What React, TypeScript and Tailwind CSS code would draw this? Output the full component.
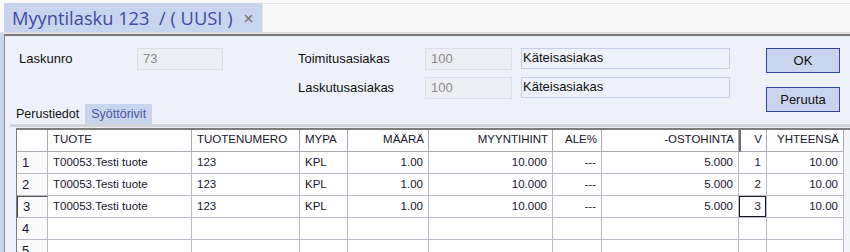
import React from 'react';

type Col = { key: string; label: string; w: string; align: 'left' | 'right' };

const cols: Col[] = [
  { key: 'tuote', label: 'TUOTE', w: 'w-[144px]', align: 'left' },
  { key: 'nro', label: 'TUOTENUMERO', w: 'w-[108px]', align: 'left' },
  { key: 'mypa', label: 'MYPA', w: 'w-[48px]', align: 'left' },
  { key: 'maara', label: 'MÄÄRÄ', w: 'w-[81px]', align: 'right' },
  { key: 'hinta', label: 'MYYNTIHINT', w: 'w-[124px]', align: 'right' },
  { key: 'ale', label: 'ALE%', w: 'w-[49px]', align: 'right' },
  { key: 'osto', label: '-OSTOHINTA', w: 'w-[137px]', align: 'right' },
  { key: 'v', label: 'V', w: 'w-[28px]', align: 'right' },
  { key: 'yht', label: 'YHTEENSÄ', w: 'w-[77px]', align: 'right' },
];

const rows: Record<string, string>[] = [1, 2, 3].map((n) => ({
  tuote: 'T00053.Testi tuote',
  nro: '123',
  mypa: 'KPL',
  maara: '1.00',
  hinta: '10.000',
  ale: '---',
  osto: '5.000',
  v: String(n),
  yht: '10.00',
}));

const CloseIcon = () => (
  <svg width="9" height="9" viewBox="0 0 9 9" className="shrink-0">
    <path d="M1 1 L8 8 M8 1 L1 8" stroke="#7a7a7a" strokeWidth="1.6" />
  </svg>
);

const App: React.FC = () => {
  const allRows = [...rows, null, null];

  return (
    <div className="w-[850px] h-[252px] overflow-hidden bg-[#fafafa] font-['Liberation_Sans',Arial,sans-serif] text-[13px] text-[#111]">
      {/* Tab bar */}
      <div className="h-[36px] pt-[3px] pl-[4px] flex flex-col">
        <div className="flex h-[29px]">
          <div className="w-[258px] bg-[#c9d5ef] flex items-center pl-[8px] pr-[9px] pt-[2px]">
            <span className="whitespace-pre font-['Open_Sans',sans-serif] text-[18.3px] text-[#3d4ba0] leading-none">
              {'Myyntilasku 123  / ( UUSI )'}
            </span>
            <div className="flex-1" />
            <CloseIcon />
          </div>
          <div className="flex-1 border-t border-l border-[#e4e4e4] bg-[#f9f9f9]" />
        </div>
        <div className="h-px bg-[#dadada] -ml-[4px]" />
        <div className="h-[3px] -ml-[4px] flex">
          <div className="w-[4px] bg-[#c9d5ef]" />
          <div className="flex-1 flex flex-col">
            <div className="h-px bg-[#e8e8e8]" />
            <div className="h-[2px] bg-[#7b7b7b]" />
          </div>
        </div>
      </div>

      {/* Body */}
      <div className="flex h-[216px]">
        <div className="w-[4px] bg-[#c9d5ef]" />
        <div className="flex-1 border-l border-[#8a8a8a] bg-[#eef1f9] flex flex-col">
          {/* Form */}
          <div className="h-[68px] shrink-0 flex pt-[12px] pl-[14px]">
            <div className="w-[118px] h-[22px] flex items-center">Laskunro</div>
            <div className="w-[86px] h-[22px] bg-[#eceef4] border border-[#dcdfe7] px-[5px] flex items-center text-[#8a8a8a]">73</div>
            <div className="w-[75px]" />
            <div className="flex flex-col gap-[7px]">
              {['Toimitusasiakas', 'Laskutusasiakas'].map((l) => (
                <div key={l} className="flex h-[22px] shrink-0">
                  <div className="w-[127px] flex items-center">{l}</div>
                  <div className="w-[87px] bg-[#eceef4] border border-[#dcdfe7] px-[5px] flex items-center text-[#8a8a8a]">100</div>
                  <div className="ml-[9px] w-[209px] h-[21px] border border-[#c6cfea] bg-[#eef1f9] px-[1px] leading-[17px]">Käteisasiakas</div>
                </div>
              ))}
            </div>
            <div className="ml-[36px] flex flex-col gap-[14px]">
              <button className="shrink-0 w-[74px] h-[25px] bg-[#c9d5ef] border-[1.5px] border-[#34479e] text-[13px] text-[#111]">OK</button>
              <button className="shrink-0 w-[74px] h-[25px] bg-[#c9d5ef] border-[1.5px] border-[#34479e] text-[13px] text-[#111]">Peruuta</button>
            </div>
          </div>

          {/* Tabs */}
          <div className="ml-[5px] h-[20px] shrink-0 flex items-stretch text-[12.5px]">
            <div className="px-[6px] flex items-center">Perustiedot</div>
            <div className="px-[6px] flex items-center bg-[#c9d5ef] text-[#4856a8]">Syöttörivit</div>
          </div>
          <div className="ml-[5px] h-[3px] shrink-0 bg-[#d3d4d8]" />

          {/* Grid */}
          <div className="ml-[11px] mt-[1px] flex-1 border-t-2 border-l border-[#7d7d7d] bg-[#f3f4f8] overflow-hidden text-[11.5px] text-[#16162c]">
            <div className="flex h-[22px]">
              <div className="w-[31px] bg-white border-r border-b border-[#a6a8b2]" />
              {cols.map((c) => (
                <div
                  key={c.key}
                  className={`${c.w} h-full bg-white border-b border-r border-[#a6a8b2] flex items-center pb-[1px] ${
                    c.align === 'right' ? 'justify-end pr-[4px]' : 'pl-[5px]'
                  } ${c.key === 'v' ? 'border-l-2 border-l-[#6f6f6f] bg-[#f7f8fc]' : ''}`}
                >
                  {c.label}
                </div>
              ))}
            </div>
            {allRows.map((r, i) => (
              <div key={i} className="flex h-[22px]">
                <div
                  className={`w-[31px] h-full bg-[#fafafb] border-r border-b border-[#b8bbc7] flex items-end pl-[5px] pb-[1px] text-[13px] ${
                    i === 2 ? 'border-t border-t-[#555] border-l border-l-[#444]' : ''
                  }`}
                >
                  {i + 1}
                </div>
                {cols.map((c) => (
                  <div
                    key={c.key}
                    className={`${c.w} h-full bg-white border-b border-r border-[#b8bbc7] flex ${
                      c.align === 'right' ? 'justify-end' : ''
                    } ${c.key === 'v' && i === 2 ? 'p-0' : c.align === 'right' ? 'pr-[5px] pt-[2px]' : 'pl-[5px] pt-[2px]'}`}
                  >
                    {c.key === 'v' && i === 2 ? (
                      <div className="w-full h-full border border-[#1a1a1a] flex justify-end pr-[4px] pt-[1px]">
                        {r ? r[c.key] : ''}
                      </div>
                    ) : r ? (
                      r[c.key]
                    ) : (
                      ''
                    )}
                  </div>
                ))}
              </div>
            ))}
          </div>
        </div>
      </div>
    </div>
  );
};

export default App;
